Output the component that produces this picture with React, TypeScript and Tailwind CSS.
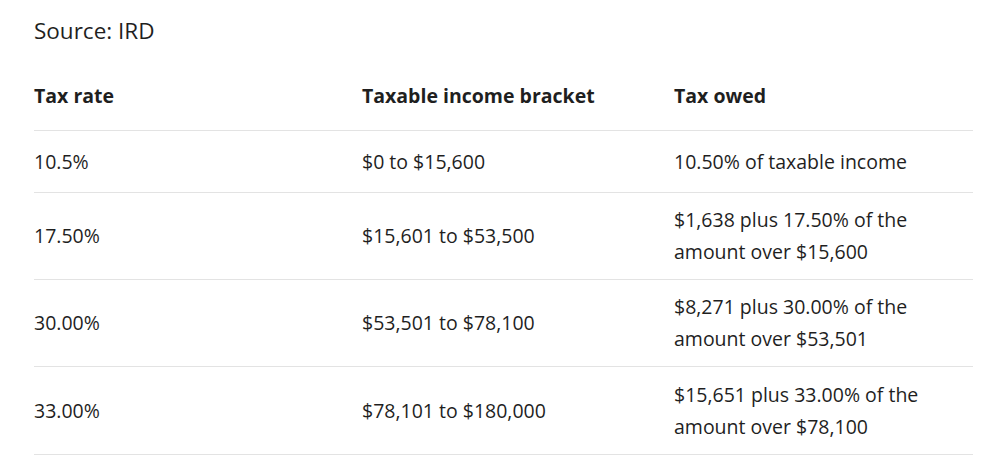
import React from "react";

const rows: { rate: string; bracket: string; owed: string[] }[] = [
  { rate: "10.5%", bracket: "$0 to $15,600", owed: ["10.50% of taxable income"] },
  { rate: "17.50%", bracket: "$15,601 to $53,500", owed: ["$1,638 plus 17.50% of the", "amount over $15,600"] },
  { rate: "30.00%", bracket: "$53,501 to $78,100", owed: ["$8,271 plus 30.00% of the", "amount over $53,501"] },
  { rate: "33.00%", bracket: "$78,101 to $180,000", owed: ["$15,651 plus 33.00% of the", "amount over $78,100"] },
];

export default function App() {
  return (
    <div
      className="w-[1000px] h-[469px] bg-white text-[#1f1f1f] pl-[34px] pr-[27px] pt-[14px] overflow-hidden"
      style={{ fontFamily: '"Open Sans", "Liberation Sans", sans-serif' }}
    >
      <div className="text-[22.5px] leading-[34px]">Source: IRD</div>
      <div className="mt-[14px]">
        <div className="flex items-center h-[69px] border-b border-[#e3e3e3] text-[19.5px] font-bold">
          <div className="w-[328px]">Tax rate</div>
          <div className="w-[312px]">Taxable income bracket</div>
          <div className="flex-1">Tax owed</div>
        </div>
        {rows.map((r, i) => (
          <div
            key={i}
            className={`flex items-center border-b border-[#e3e3e3] text-[19.5px] leading-[32px] ${i === 0 ? "h-[62px]" : i === 3 ? "h-[88px]" : "h-[87px]"}`}
          >
            <div className="w-[328px]">{r.rate}</div>
            <div className="w-[312px]">{r.bracket}</div>
            <div className="flex-1">
              {r.owed.map((l, j) => (
                <div key={j}>{l}</div>
              ))}
            </div>
          </div>
        ))}
      </div>
    </div>
  );
}
